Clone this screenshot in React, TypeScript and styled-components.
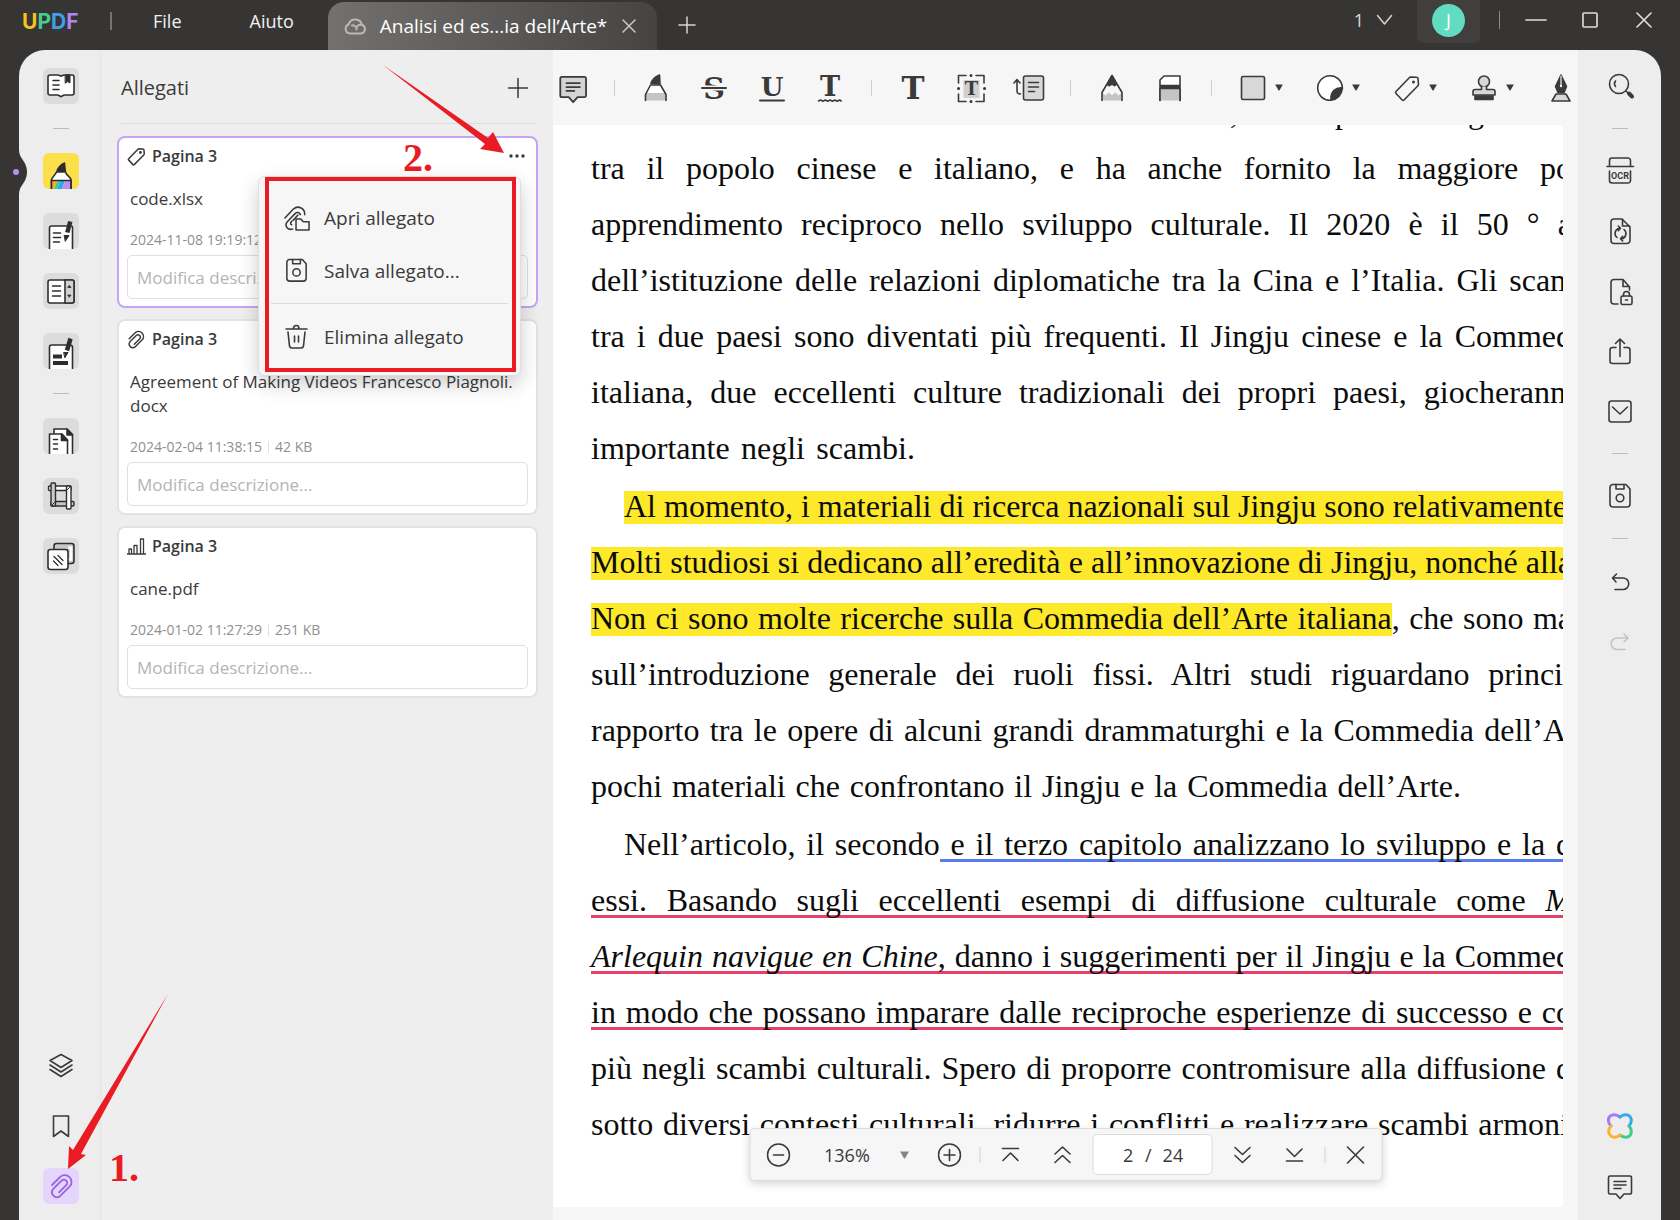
import React from "react";
import styled, { createGlobalStyle, css } from "styled-components";

const ui = `"Open Sans", "Noto Sans", sans-serif`;
const serif = `"Liberation Serif", "Times New Roman", serif`;
const ink = "#3b3a3a";

const Global = createGlobalStyle`
  *, *::before, *::after { box-sizing: border-box; }
  body { margin: 0; background: #363534; font-family: ${ui}; color: ${ink}; }
  button, input, select { font: inherit; color: inherit; margin: 0; }
  button { background: none; border: 0; padding: 0; cursor: pointer; }
  button svg { display: block; }
  p, h2, h3 { margin: 0; }
`;

/* ---------- window frame ---------- */

const Shell = styled.div`
  position: relative;
  display: flex;
  flex-direction: column;
  height: 100vh;
  min-width: 1200px;
  overflow: hidden;
  background: #363534;
`;

const TitleBar = styled.header`
  display: flex;
  align-items: stretch;
  height: 50px;
  padding: 0 24px 0 22px;
  color: #f1f1f1;
  font-size: 18px;
`;

const Logo = styled.div`
  display: flex;
  align-items: center;
  width: 57px;
  height: 42px;
  font-family: Inter, sans-serif;
  font-size: 21px;
  font-weight: 700;
`;

const LogoLetter = styled.span<{ $color: string }>`
  color: ${(p) => p.$color};
`;

const BarDivider = styled.span`
  width: 2px;
  height: 18px;
  margin: 12px 7px 0 31px;
  background: #757473;
`;

const MenuButton = styled.button`
  height: 42px;
  padding: 0 34px;
`;

const Tab = styled.div`
  display: flex;
  align-items: center;
  gap: 14px;
  width: 329px;
  height: 48px;
  margin-top: 2px;
  padding: 0 21px 0 16px;
  border-radius: 16px 16px 0 0;
  background: linear-gradient(90deg, #72716f, #454443);
`;

const TabTitle = styled.span`
  flex: 1;
  white-space: nowrap;
  color: #ffffff;
  font-size: 19px;
`;

const NewTab = styled.button`
  display: flex;
  align-items: center;
  padding: 0 21px;
`;

const WindowTools = styled.div`
  display: flex;
  align-items: center;
  height: 40px;
  margin-left: auto;
`;

const TabCount = styled.button`
  display: flex;
  align-items: center;
  gap: 12px;
  margin-right: 24px;
  color: #d9d9d9;
`;

const Account = styled.button`
  display: flex;
  justify-content: center;
  width: 63px;
  height: 43px;
  padding-top: 4px;
  align-self: flex-start;
  border-radius: 0 0 6px 6px;
  background: #403f3e;
`;

const Avatar = styled.span`
  width: 33px;
  height: 33px;
  border-radius: 50%;
  background: #62dcc0;
  color: #ffffff;
  line-height: 32px;
  text-align: center;
`;

const ToolsDivider = styled.span`
  width: 1px;
  height: 18px;
  margin: 0 24px 0 19px;
  background: #8a8988;
`;

const WindowButtons = styled.div`
  display: flex;
  gap: 30px;
`;

const WindowButton = styled.button`
  display: flex;
  justify-content: center;
  width: 24px;
`;

const Workspace = styled.main`
  position: relative;
  flex: 1;
  min-height: 0;
  display: flex;
  margin: 0 19px;
  border-radius: 26px 26px 0 0;
  background: #eeedee;
`;

/* ---------- side rails ---------- */

const Rail = styled.nav<{ $side: "left" | "right" }>`
  display: flex;
  flex-direction: column;
  align-items: center;
  gap: 24px;
  flex: none;
  width: 83px;
  padding: 18px 0 16px;
  ${(p) => p.$side === "left" && css`box-shadow: inset -3px 0 0 #eae9ea;`}
`;

const Tile = styled.button<{ $bg?: string; $push?: boolean }>`
  display: flex;
  flex: none;
  width: 36px;
  height: 36px;
  border-radius: 6px;
  overflow: hidden;
  background: ${(p) => p.$bg ?? "transparent"};
  ${(p) => p.$push && css`margin-top: auto;`}
`;

const RailLine = styled.span`
  flex: none;
  width: 16px;
  height: 1px;
  background: #bdbcbd;
`;

const Notch = styled.svg`
  position: absolute;
  left: -8px;
  top: 100px;
`;

/* ---------- attachments panel ---------- */

const Panel = styled.aside`
  flex: none;
  width: 451px;
  padding: 0 15px;
  background: #eeeeee;
`;

const PanelHead = styled.div`
  display: flex;
  align-items: center;
  justify-content: space-between;
  height: 74px;
  margin: 0 2px 12px 4px;
  padding: 2px 7px 0 0;
  border-bottom: 1px solid #dddddd;
`;

const PanelTitle = styled.h2`
  font-size: 20px;
  font-weight: 400;
`;

const CardList = styled.div`
  display: flex;
  flex-direction: column;
  gap: 11px;
`;

const Card = styled.article<{ $active?: boolean }>`
  position: relative;
  padding: 6px 8px 7px;
  border: 2px solid ${(p) => (p.$active ? "#c3a6f2" : "#e2e2e2")};
  border-radius: 8px;
  background: #ffffff;
`;

const CardHead = styled.div`
  display: flex;
  align-items: center;
  gap: 6px;
  height: 24px;
  padding-right: 2px;
`;

const CardTitle = styled.h3`
  flex: 1;
  font-size: 16px;
  line-height: 24px;
  font-weight: 600;
`;

const FileName = styled.p`
  padding: 0 3px;
  margin: 19px 0 17px;
  font-size: 17px;
  line-height: 24px;
  overflow-wrap: anywhere;
`;

const Meta = styled.p`
  display: flex;
  align-items: center;
  gap: 6px;
  padding: 0 3px;
  margin-bottom: 3px;
  font-size: 14px;
  line-height: 24px;
  color: #8f8f8f;
`;

const MetaLine = styled.span`
  width: 1px;
  height: 12px;
  background: #e0e0e0;
`;

const Note = styled.input`
  display: block;
  width: 100%;
  height: 44px;
  padding: 0 9px;
  border: 1px solid #e0e0e0;
  border-radius: 5px;
  background: #ffffff;
  font-size: 17px;
  &::placeholder { color: #b4b4b4; opacity: 1; }
`;

const Menu = styled.div`
  position: absolute;
  z-index: 2;
  left: 139px;
  top: 38px;
  width: 263px;
  height: 200px;
  padding: 14px 12px 12px;
  border: 1px solid #dedede;
  border-radius: 7px;
  background: #f7f6f6;
  box-shadow: 0 8px 20px rgba(0, 0, 0, 0.2);
`;

const MenuItem = styled.button`
  display: flex;
  align-items: center;
  gap: 14px;
  width: 100%;
  height: 53px;
  padding-left: 12px;
  font-size: 19px;
  white-space: nowrap;
`;

const MenuLine = styled.div`
  height: 1px;
  margin: 6px 0;
  background: #dcdcdc;
`;

const RedFrame = styled.div`
  position: absolute;
  inset: 0 4px 3px 6px;
  border: 4px solid #e91c24;
  pointer-events: none;
`;

/* ---------- document ---------- */

const Doc = styled.section`
  position: relative;
  flex: 1;
  min-width: 0;
  display: flex;
  flex-direction: column;
  background: #f6f6f7;
`;

const Toolbar = styled.div`
  display: flex;
  align-items: center;
  gap: 24px;
  flex: none;
  height: 75px;
  padding: 0 3px;
  overflow: hidden;
`;

const Tool = styled.button<{ $menu?: boolean }>`
  display: flex;
  align-items: center;
  gap: 5px;
  flex: none;
  width: ${(p) => (p.$menu ? 53 : 34)}px;
`;

const ToolLine = styled.span`
  flex: none;
  width: 1px;
  height: 16px;
  background: #cfcfcf;
`;

const Page = styled.div`
  flex: 1;
  min-height: 0;
  margin: 0 15px 13px 0;
  padding-left: 38px;
  overflow: hidden;
  background: #ffffff;
  color: #0c0c0c;
  font-family: ${serif};
  font-size: 32px;
  line-height: 56px;
`;

const CutLine = styled.div`
  display: grid;
  grid-template-columns: 105px 133px 95px;
  grid-template-rows: 15px;
  justify-content: end;
  align-items: end;
`;

const Paragraph = styled.div`
  margin-bottom: 2px;
`;

const Line = styled.p<{ $indent?: boolean; $bleed: number }>`
  width: calc(100% + ${(p) => p.$bleed}px);
  padding-left: ${(p) => (p.$indent ? 33 : 0)}px;
  white-space: nowrap;
  text-align: justify;
  text-align-last: justify;
`;

const Marked = styled.mark`
  color: inherit;
  background: linear-gradient(#fde82a, #fde82a) 0 100% / 100% 33px no-repeat;
`;

const Ruled = styled.span<{ $color: string }>`
  background: linear-gradient(${(p) => p.$color}, ${(p) => p.$color}) 0 100% / 100% 3px no-repeat;
`;

const ZoomBar = styled.div`
  position: absolute;
  left: 50%;
  bottom: 39px;
  transform: translateX(-50%);
  display: flex;
  align-items: center;
  gap: 18px;
  height: 53px;
  padding: 0 14px 0 16px;
  border: 1px solid #dcdcdc;
  border-radius: 5px;
  background: #f6f6f6;
  box-shadow: 0 3px 8px rgba(0, 0, 0, 0.16);
  font-size: 18px;
`;

const Group = styled.div`
  display: flex;
  align-items: center;
  gap: 28px;
`;

const BarButton = styled.button`
  display: flex;
  width: 24px;
  height: 24px;
`;

const ZoomSelect = styled.label`
  display: flex;
  align-items: center;
  gap: 28px;
`;

const Select = styled.select`
  appearance: none;
  width: 53px;
  padding: 0 0 0 6px;
  border: 0;
  background: none;
  white-space: nowrap;
`;

const PageBox = styled.label`
  display: flex;
  align-items: center;
  gap: 11px;
  width: 120px;
  height: 41px;
  padding-left: 30px;
  border: 1px solid #dcdcdc;
  border-radius: 5px;
  background: #ffffff;
`;

const PageInput = styled.input`
  width: 11px;
  padding: 0;
  border: 0;
  background: none;
`;

/* ---------- annotations ---------- */

const Arrows = styled.svg`
  position: absolute;
  z-index: 3;
  left: 0;
  pointer-events: none;
`;

const StepOne = styled.span`
  position: absolute;
  z-index: 3;
  left: 109px;
  bottom: 30px;
  color: #e91c24;
  font: bold 40px/44px ${serif};
`;

const StepTwo = styled(StepOne)`
  left: 403px;
  top: 136px;
  bottom: auto;
`;

/* ---------- icons ---------- */

type IconProps = { w?: number; h?: number; box?: string; stroke?: string; sw?: number; children: React.ReactNode };

const IconSvg = styled.svg`
  flex: none;
`;

const Icon = ({ w = 36, h = w, box, stroke = ink, sw = 1.6, children }: IconProps) => (
  <IconSvg
    width={w}
    height={h}
    viewBox={box ?? `0 0 ${w} ${h}`}
    fill="none"
    stroke={stroke}
    strokeWidth={sw}
    strokeLinecap="round"
    strokeLinejoin="round"
    aria-hidden="true"
  >
    {children}
  </IconSvg>
);

const dark = "#2f2d30";
const clipPath = "M9 17 17.2 8.8a6.8 6.8 0 0 1 9.6 9.6L17 28.2a5 5 0 0 1-7-7l8.6-8.6a3.25 3.25 0 0 1 4.6 4.6L16 24.4";

const saveShape = (
  <>
    <path d="M10 6.5H24l4 4.500V26a3 3 0 0 1-3 3H11a3 3 0 0 1-3-3V9.500a3 3 0 0 1 3-3z" />
    <path d="M14 6.500v4.500h8V6.500" />
    <circle cx="18" cy="20" r="3.800" />
  </>
);

const Caret = ({ w = 8, h = 7, color = ink }: { w?: number; h?: number; color?: string }) => (
  <Icon w={w} h={h} box="0 0 10 9" stroke="none"><path d="M0 .5H10L5.500 8.500h-1z" fill={color} /></Icon>
);

const leftIcons = {
  book: (
    <Icon stroke={dark}>
      <path d="M7 7h7.500c2 0 2 1 3.500 1s1.500-1 3.500-1H29a2 2 0 0 1 2 2v16a2 2 0 0 1-2 2h-7.500c-2 0-2 1.500-3.500 1.500S16.500 27 14.500 27H7a2 2 0 0 1-2-2V9a2 2 0 0 1 2-2z" fill="#fff" />
      <path d="M10 12.500h6M10 17h6M10 21.500h6" />
      <path d="M22.500 7h4.500v8l-2.250-1.500L22.500 15z" fill={dark} strokeWidth="1" />
    </Icon>
  ),
  marker: (
    <Icon stroke={dark}>
      <path d="M14 18.500c0-3 4-7 7.500-8.500l.8 8.500z" fill={dark} />
      <path d="M8.500 36V27c0-3 3.500-4 5-8h9c1 4 5.500 5 5.500 8v9" fill="#fff" />
      <g stroke="none">
        <path d="M9 28h5l-3 8H9z" fill="#f5b019" />
        <path d="M14 28h3l-3 8h-3z" fill="#4fc58a" />
        <path d="M17 28h5l-3 8h-5z" fill="#27aee4" />
        <path d="M22 28h5.500v8H19z" fill="#bd8df0" />
      </g>
      <path d="M8.500 27.500H28M8.500 27v9M28 27v9" />
    </Icon>
  ),
  edit: (
    <Icon stroke={dark}>
      <path d="M6.500 37V15a2 2 0 0 1 2-2H28a1.500 1.500 0 0 1 1.500 1.500V37" fill="#fff" />
      <path d="M10.500 20h7M10.500 24.500h7M10.500 29h6" />
      <path d="m27.300 8.500-3 11" strokeWidth="4.500" strokeLinecap="butt" />
      <path d="M21.500 22.500h4.500l-3.500 5.500z" fill={dark} strokeWidth="1" />
    </Icon>
  ),
  reader: (
    <Icon stroke={dark}>
      <rect x="5" y="7" width="26" height="23" rx="2" fill="#fff" />
      <path d="M22 7h7a2 2 0 0 1 2 2v19a2 2 0 0 1-2 2h-7z" fill="#d2d1d2" />
      <path d="M9.500 13h8M9.500 18h8M9.500 23h8" />
      <path d="m26.500 12.500 1.500 2h-3zM26.500 24l1.500-2h-3z" fill={dark} strokeWidth=".8" />
    </Icon>
  ),
  redact: (
    <Icon stroke={dark}>
      <path d="M6.500 37V14a2 2 0 0 1 2-2H27a2.500 2.500 0 0 1 2.500 2.500V37" fill="#fff" />
      <path d="M10 23.500h9M10 30h15" strokeWidth="4" strokeLinecap="butt" />
      <path d="m27.500 5.500-3.500 12" strokeWidth="4.500" strokeLinecap="butt" />
      <path d="M21 19.500h4l-3 5z" fill={dark} strokeWidth="1" />
    </Icon>
  ),
  pages: (
    <Icon stroke={dark}>
      <path d="M11 37V11h13l5.500 5.500V37" fill="#fff" />
      <path d="M24 11v6h5.500z" fill={dark} />
      <path d="M6.500 37V16H19l5.500 6V37" fill="#fff" />
      <path d="M18.500 16v6.500h6z" fill={dark} />
      <path d="M10.500 21.500h4M10.500 26h4M10.500 31h4" />
    </Icon>
  ),
  crop: (
    <Icon stroke={dark} sw={1.4}>
      <rect x="8" y="23.500" width="23" height="4.500" rx="1" fill="#c9c8c9" />
      <rect x="5.500" y="8" width="22.500" height="4.500" rx="1" fill="#fff" />
      <rect x="8" y="5" width="4.500" height="23" rx="1" fill="#c9c8c9" />
      <rect x="23.500" y="8" width="4.500" height="23" rx="1" fill="#fff" />
      <path d="m9 27 3.500-3.500M27.500 8.500l-4 4" strokeWidth="1" />
    </Icon>
  ),
  watermark: (
    <Icon stroke={dark}>
      <rect x="11" y="5.500" width="20" height="20" rx="2.500" fill="#c9c8c9" />
      <path d="M26.500 9.500h1.500v12h-1.500" stroke="#fff" strokeWidth="2.500" />
      <rect x="5" y="11.500" width="20" height="20" rx="2.500" fill="#fff" />
      <path d="m11 18.500 8 8M15 17.500l5 5M10.500 23l4.500 4.500" strokeWidth="1.300" />
    </Icon>
  ),
};

const leftTools: Array<[string, React.ReactNode]> = [
  ["Lettore", leftIcons.book],
  ["Commenti", leftIcons.marker],
  ["Modifica", leftIcons.edit],
  ["Modulo", leftIcons.reader],
  ["Oscura", leftIcons.redact],
  ["Pagine", leftIcons.pages],
  ["Ritaglia", leftIcons.crop],
  ["Filigrana", leftIcons.watermark],
];

const CommentShape = ({ fill = "none" }: { fill?: string }) => (
  <>
    <path d="M8 8H28a1.500 1.500 0 0 1 1.500 1.500V24.500A1.500 1.500 0 0 1 28 26h-6l-4 4.500L14 26H8a1.500 1.500 0 0 1-1.500-1.500V9.500A1.500 1.500 0 0 1 8 8z" fill={fill} />
    <path d="M12 13.500h12M12 17h12M12 20.500h7" />
  </>
);

const glyph = { fontFamily: `"DejaVu Serif", serif`, fontWeight: 700, fill: ink, stroke: "none", textAnchor: "middle" as const };

const toolIcons: Array<[string, React.ReactNode, boolean?] | null> = [
  ["Nota", <Icon w={34} box="1 2 34 34"><g transform="translate(-2 -1) scale(1.120)"><CommentShape fill="#d5d4d5" /></g></Icon>],
  null,
  ["Evidenzia", <Icon w={34}><path d="M12 12.500c1-4 4-6.500 8.500-8.500l.5 9z" fill={ink} /><path d="M6.500 29.500v-7L11.500 14h10l5.500 8.500v7z" fill="#fff" stroke="none" /><path d="M6.500 22h20.500v7.500H6.500z" fill="#c4c4c4" stroke="none" /><path d="M6.500 29.500v-6L11.500 14h10l5.500 9.500v6" /></Icon>],
  ["Barrato", <Icon w={34}><text x="17" y="28" fontSize="30" {...glyph}>S</text><path d="M5 17h24" stroke="#f6f6f7" strokeWidth="5" /><path d="M5 17h24" strokeWidth="2" /></Icon>],
  ["Sottolineato", <Icon w={34}><text x="17" y="25" fontSize="26" {...glyph}>U</text><path d="M5 29.500h24" strokeWidth="2" /></Icon>],
  ["Ondulato", <Icon w={34}><text x="17" y="25" fontSize="27" {...glyph}>T</text><path d="m5.500 30 2-1 2.400 1.200 2.400-1.200 2.400 1.200 2.400-1.200 2.400 1.200 2.400-1.200 2.400 1.200 2.400-1.200 1.500 1" /></Icon>],
  null,
  ["Testo", <Icon w={34}><text x="17" y="28" fontSize="31" {...glyph}>T</text></Icon>],
  ["Casella di testo", <Icon w={34}><rect x="9.500" y="9" width="16" height="18" fill="#d0d0d0" stroke="none" /><path d="M12 4.500H4.500V12M22 4.500h8V12M12 30.500H4.500V23M22 30.500h8V23" /><path d="M17 4.500v.1M17 30.500v.1M4.500 17.500h.1M30.500 17.500h.1" strokeWidth="3" /><text x="17.500" y="24" fontSize="18" {...glyph}>T</text></Icon>],
  ["Didascalia", <Icon w={34}><rect x="11.500" y="5" width="20" height="24" rx="2" fill="#d8d8d8" /><path d="M16.500 11.500h10M16.500 16h10M16.500 20.500h6M8.500 23C5.500 23 5 22 5 20V9M2 12l3-3.500L8 12" /></Icon>],
  null,
  ["Matita", <Icon w={34}><path d="m7 21.500 3.300 3 3.400-3 3.300 3 3.300-3 3.400 3 3.300-3v8H7z" fill="#c4c4c4" stroke="none" /><path d="M7 29.500v-8L17 4.500l10 17v8" /><path d="m12 13.500 5-9.500 5 9.500-2.500 1.500-2.500-1.500-2.500 1.500z" fill={ink} strokeWidth="1" /></Icon>],
  ["Gomma", <Icon w={34}><path d="M7 29.500V9l4-4h16v24.500" fill="#fff" /><path d="M7 18h20v11.500H7z" fill="#c4c4c4" stroke="none" /><path d="M7 29.500V18m20 11.500V18" /><path d="M7 16h20" strokeWidth="4.500" strokeLinecap="butt" /></Icon>],
  null,
  ["Forma", <Icon w={34}><rect x="5.500" y="5.500" width="23" height="23" rx="1.500" fill="#d8d8d8" /></Icon>, true],
  ["Adesivo", <Icon w={34}><path d="M29.300 16.500A12.300 12.300 0 1 0 17.500 29.300" fill="#fff" /><path d="M29.500 17c-6-1-12.500 3-11.500 12.300C24 28.500 28.500 24 29.500 17z" fill={ink} /></Icon>, true],
  ["Allegato", <Icon w={34}><path d="m6 20.500 13-13.500c.6-.7 1.200-1 2-1l5.500.3c1 0 1.500.6 1.500 1.500L28.500 13c0 .8-.3 1.500-.8 2L14 29c-.5.600-1.200.6-1.800 0L6 22.500c-.6-.600-.6-1.400 0-2z" /><circle cx="23.500" cy="11" r="1.500" fill={ink} stroke="none" /></Icon>, true],
  ["Timbro", <Icon w={34}><circle cx="17" cy="10.500" r="5.500" fill="#d8d8d8" /><path d="M14.500 15.500v3H8a2 2 0 0 0-2 2V24h22v-3.500a2 2 0 0 0-2-2h-6.500v-3" fill="#d8d8d8" /><path d="M8 25h18v3.500H8z" fill={ink} /></Icon>, true],
  ["Firma", <Icon w={34}><path d="m17 4 5.500 11.500-2.500 6h-6l-2.500-6z" fill={ink} /><path d="M17 5v9" stroke="#f6f6f7" strokeWidth="1.200" /><circle cx="17" cy="15" r="1.200" fill="#f6f6f7" stroke="none" /><path d="M12 23h10l4 7H8z" fill="#d8d8d8" /></Icon>],
];

const docOutline = "M20 6H12a3 3 0 0 0-3 3v18.500a3 3 0 0 0 3 3h13a3 3 0 0 0 3-3V14z";

const rightIcons: Array<[string, React.ReactNode] | null> = [
  ["Cerca", <Icon><circle cx="17" cy="16" r="9.500" /><path d="M13.500 13a4.500 4.500 0 0 0 0 5.500M24 23l3 3" /><path d="m27 25.500 3 3" strokeWidth="4" /></Icon>],
  null,
  ["OCR", <Icon><path d="M7.500 13V7.500a2.500 2.500 0 0 1 2.500-2.500h16a2.500 2.500 0 0 1 2.500 2.500V13M5 13.500h26.500M7.500 18v9.500a2.500 2.500 0 0 0 2.500 2.500h16a2.500 2.500 0 0 0 2.500-2.500V18" /><text x="18" y="26" fontSize="9" fontFamily="Roboto, sans-serif" fontWeight="700" fill={ink} stroke="none" textAnchor="middle">OCR</text></Icon>],
  ["Converti", <Icon><path d={docOutline} /><path d="M20.500 6.500V13h7M15 24.500a5.200 5.200 0 0 1 2.500-9.200M16.300 13l2.200 2.300-2.200 2.300M22 16.500a5.200 5.200 0 0 1-2.500 9.200M20.700 23.400l-2.200 2.300 2.200 2.300" /></Icon>],
  ["Proteggi", <Icon><path d="M16 31h-4a3 3 0 0 1-3-3V9.500a3 3 0 0 1 3-3h9l6.500 7.500v3M21 7v6.500h6.500" /><rect x="19" y="23" width="11" height="8.500" rx="1.500" /><path d="M21.500 23v-1.500a3 3 0 0 1 6 0V23M23.500 27h2" /></Icon>],
  ["Condividi", <Icon><path d="M14 14.500h-3.500A2.500 2.500 0 0 0 8 17v11a2.500 2.500 0 0 0 2.500 2.500h15A2.500 2.500 0 0 0 28 28V17a2.500 2.500 0 0 0-2.500-2.500H22M18 23.500V6M13.500 10.500 18 6l4.500 4.500" /></Icon>],
  ["E-mail", <Icon><rect x="7" y="8" width="22" height="21" rx="2.500" /><path d="m10.500 14 7.500 7 7.500-7" /></Icon>],
  null,
  ["Salva", <Icon>{saveShape}</Icon>],
  null,
  ["Annulla", <Icon><path d="M14.500 11 10.500 15l3.500 4M10.500 15H21a5.500 5.500 0 0 1 0 11.500h-8" /></Icon>],
  ["Ripeti", <Icon stroke="#c4c3c4"><path d="m22 11 4 4-4 4M26 15H15a5.500 5.500 0 0 0 0 11.500h8" /></Icon>],
];

/* ---------- data ---------- */

const files = [
  {
    icon: <Icon w={19} box="3.500 3.500 27.500 27.500" sw={2.2}><path d="m6 20.500 13-13.500c.6-.7 1.200-1 2-1l5.500.3c1 0 1.500.6 1.500 1.500L28.500 13c0 .8-.3 1.500-.8 2L14 29c-.5.600-1.200.6-1.800 0L6 22.500c-.6-.600-.6-1.400 0-2z" /><circle cx="23" cy="11.500" r="1" /></Icon>,
    name: "code.xlsx", date: "2024-11-08 19:19:12", size: "", active: true,
  },
  {
    icon: <Icon w={19} box="6 5 26 26" sw={2}><path d={clipPath} /></Icon>,
    name: "Agreement of Making Videos Francesco Piagnoli. docx", date: "2024-02-04 11:38:15", size: "42 KB",
  },
  {
    icon: <Icon w={19} sw={1.300}><path d="M0 17h19M2 17v-5h2.500v5M7 17V8.500h3V17M13.500 17V2h3v15" /></Icon>,
    name: "cane.pdf", date: "2024-01-02 11:27:29", size: "251 KB",
  },
];

const red = "#e8406b";
type TextLine = { text: React.ReactNode; bleed: number; indent?: boolean };

const paragraphs: TextLine[][] = [
  [
    { text: "tra il popolo cinese e italiano, e ha anche fornito la maggiore po", bleed: 9 },
    { text: "apprendimento reciproco nello sviluppo culturale. Il 2020 è il 50 ° a", bleed: 9 },
    { text: "dell’istituzione delle relazioni diplomatiche tra la Cina e l’Italia. Gli scam", bleed: 12 },
    { text: "tra i due paesi sono diventati più frequenti. Il Jingju cinese e la Commed", bleed: 9 },
    { text: "italiana, due eccellenti culture tradizionali dei propri paesi, giocherann", bleed: 3 },
    { text: "importante negli scambi.", bleed: -648 },
  ],
  [
    { text: <Marked>Al momento, i materiali di ricerca nazionali sul Jingju sono relativamente</Marked>, bleed: 3, indent: true },
    { text: <Marked>Molti studiosi si dedicano all’eredità e all’innovazione di Jingju, nonché alla</Marked>, bleed: 9 },
    { text: <><Marked>Non ci sono molte ricerche sulla Commedia dell’Arte italiana</Marked>, che sono ma</>, bleed: 9 },
    { text: "sull’introduzione generale dei ruoli fissi. Altri studi riguardano princi", bleed: 0 },
    { text: "rapporto tra le opere di alcuni grandi drammaturghi e la Commedia dell’A", bleed: 3 },
    { text: "pochi materiali che confrontano il Jingju e la Commedia dell’Arte.", bleed: -102 },
  ],
  [
    { text: <>Nell’articolo, il secondo<Ruled $color="#587bf2"> e il terzo capitolo analizzano lo sviluppo e la d</Ruled></>, bleed: 9, indent: true },
    { text: <Ruled $color={red}>essi. Basando sugli eccellenti esempi di diffusione culturale come <em>M</em></Ruled>, bleed: 9 },
    { text: <Ruled $color={red}><em>Arlequin navigue en Chine</em>, danno i suggerimenti per il Jingju e la Commed</Ruled>, bleed: 9 },
    { text: <Ruled $color={red}>in modo che possano imparare dalle reciproche esperienze di successo e co</Ruled>, bleed: 9 },
    { text: "più negli scambi culturali. Spero di proporre contromisure alla diffusione d", bleed: 9 },
    { text: "sotto diversi contesti culturali, ridurre i conflitti e realizzare scambi armoni", bleed: 6 },
  ],
];

/* ---------- parts ---------- */

const AttachmentMenu = () => (
  <Menu>
    <MenuItem>
      <Icon w={27} box="3 3 28 28">
        <path d="M5 17.500 14 8a7 7 0 0 1 11.500 6" />
        <path d="m13 29c-5 1.500-9-3.500-5.500-7.500l8-8.500a3.200 3.200 0 0 1 5.500 1M13.500 20l5-5.500M12 24.500c-1.500-.5-1.500-2 0-3.500" />
        <path d="M16.500 18.500h5l2.500 3h6V30h-13.500z" fill="#f7f6f6" />
      </Icon>
      Apri allegato
    </MenuItem>
    <MenuItem><Icon w={27} box="4 4 28 28">{saveShape}</Icon>Salva allegato...</MenuItem>
    <MenuLine />
    <MenuItem>
      <Icon w={27}><path d="M3 6h21M10.500 5.500c0-4 5.500-4 5.500 0M5 9l1.500 14a2.500 2.500 0 0 0 2.500 2h9a2.500 2.500 0 0 0 2.500-2L22 9M11.500 13v6M15.500 13v6" /></Icon>
      Elimina allegato
    </MenuItem>
    <RedFrame />
  </Menu>
);

const Attachments = () => (
  <Panel>
    <PanelHead>
      <PanelTitle>Allegati</PanelTitle>
      <button aria-label="Aggiungi allegato"><Icon w={22}><path d="M11 1.500v19M1.500 11h19" strokeWidth="1.500" /></Icon></button>
    </PanelHead>
    <CardList>
      {files.map((f) => (
        <Card key={f.name} $active={f.active}>
          <CardHead>
            {f.icon}
            <CardTitle>Pagina 3</CardTitle>
            {f.active && (
              <button aria-label="Altro">
                <Icon w={18} h={6} stroke="none"><g fill={ink}><circle cx="3" cy="3" r="1.700" /><circle cx="9" cy="3" r="1.700" /><circle cx="15" cy="3" r="1.700" /></g></Icon>
              </button>
            )}
          </CardHead>
          <FileName>{f.name}</FileName>
          <Meta>{f.date}{f.size && <><MetaLine />{f.size}</>}</Meta>
          <Note aria-label={`Descrizione di ${f.name}`} placeholder="Modifica descrizione..." />
          {f.active && <AttachmentMenu />}
        </Card>
      ))}
    </CardList>
  </Panel>
);

const LeftRail = () => (
  <Rail $side="left">
    {leftTools.map(([title, icon], i) => (
      <React.Fragment key={title}>
        {(i === 1 || i === 5) && <RailLine />}
        <Tile aria-label={title} $bg={i === 1 ? "#fbe04c" : "#dddcdd"}>{icon}</Tile>
      </React.Fragment>
    ))}
    <Tile aria-label="Livelli" $push>
      <Icon><path d="m18 6.500 11 6-11 7-11-7zM7 17l11 7 11-7M7 21.500l11 7 11-7" /></Icon>
    </Tile>
    <Tile aria-label="Segnalibri"><Icon><path d="M10.500 8h15v20.500L18 23l-7.500 5.500z" /></Icon></Tile>
    <Tile aria-label="Allegati" $bg="#e4d5fd"><Icon stroke="#9b62e0" sw={1.8}><path d={clipPath} /></Icon></Tile>
  </Rail>
);

const RightRail = () => (
  <Rail $side="right">
    {rightIcons.map((item, i) =>
      item ? <Tile key={item[0]} aria-label={item[0]}>{item[1]}</Tile> : <RailLine key={i} />
    )}
    <Tile aria-label="Assistente" $push>
      <Icon sw={3}>
        <path d="M9 18c-3.500-3.500-3.500-8.500 0-10.500 3-1.500 6-1 9 1.500" stroke="#a77cf0" />
        <path d="M18 9c3-3 7.500-3 10-.5 2 3 1.500 6.500-1 9.500" stroke="#36a9ee" />
        <path d="M27 18c3 3 3 7.500.5 10-3 2-6.500 1.500-9.500-1" stroke="#3fcb8c" />
        <path d="M18 27c-3 3-8 3-10 0-2-2.500-1.500-6 1-9" stroke="#f8b62c" />
      </Icon>
    </Tile>
    <Tile aria-label="Elenco commenti"><Icon><CommentShape /></Icon></Tile>
  </Rail>
);

const Document = () => (
  <Doc>
    <Toolbar>
      {toolIcons.map((t, i) =>
        t ? (
          <Tool key={t[0]} aria-label={t[0]} $menu={t[2]}>{t[1]}{t[2] && <Caret />}</Tool>
        ) : (
          <ToolLine key={i} />
        )
      )}
    </Toolbar>
    <Page>
      <CutLine><span>,</span><span>p</span><span>g</span></CutLine>
      {paragraphs.map((lines, i) => (
        <Paragraph key={i}>
          {lines.map((l, j) => <Line key={j} $indent={l.indent} $bleed={l.bleed}>{l.text}</Line>)}
        </Paragraph>
      ))}
    </Page>
    <ZoomBar>
      <Group>
        <BarButton aria-label="Riduci"><Icon w={24}><circle cx="12" cy="12" r="11" /><path d="M7 12h10" /></Icon></BarButton>
        <ZoomSelect>
          <Select aria-label="Zoom" defaultValue="136%"><option>136%</option></Select>
          <Caret w={10} h={8} color="#858585" />
        </ZoomSelect>
        <BarButton aria-label="Ingrandisci"><Icon w={24}><circle cx="12" cy="12" r="11" /><path d="M6.500 12h11M12 6.500v11" /></Icon></BarButton>
      </Group>
      <ToolLine />
      <Group>
        <BarButton aria-label="Prima pagina"><Icon w={24}><path d="M4 5.500h16M4.500 17.500 12 10l7.500 7.500" /></Icon></BarButton>
        <BarButton aria-label="Pagina precedente"><Icon w={24}><path d="M4.500 11 12 4l7.500 7M4.500 19.500l7.500-7 7.500 7" /></Icon></BarButton>
      </Group>
      <PageBox>
        <PageInput aria-label="Pagina" defaultValue="2" />
        <span>/</span>
        <span>24</span>
      </PageBox>
      <Group>
        <BarButton aria-label="Pagina successiva"><Icon w={24}><path d="m4.500 4.500 7.500 7 7.500-7M4.500 12.500l7.500 7 7.500-7" /></Icon></BarButton>
        <BarButton aria-label="Ultima pagina"><Icon w={24}><path d="m4.500 6 7.500 7.500L19.500 6M4 18h16" /></Icon></BarButton>
      </Group>
      <ToolLine />
      <BarButton aria-label="Chiudi"><Icon w={24}><path d="m4 4 16 16M20 4 4 20" /></Icon></BarButton>
    </ZoomBar>
  </Doc>
);

const Header = () => (
  <TitleBar>
    <Logo>
      <LogoLetter $color="#f6c21c">U</LogoLetter>
      <LogoLetter $color="#43cf8b">P</LogoLetter>
      <LogoLetter $color="#3f9fe8">D</LogoLetter>
      <LogoLetter $color="#b184f2">F</LogoLetter>
    </Logo>
    <BarDivider />
    <MenuButton>File</MenuButton>
    <MenuButton>Aiuto</MenuButton>
    <Tab>
      <Icon w={22} h={18} stroke="#b9b8b7" sw={2}>
        <path d="M6 16.500h10.500a4.500 4.500 0 0 0 1.500-8.700A7 7 0 0 0 4.500 7.500 4.700 4.700 0 0 0 6 16.500zM18 8c-3-1-6 1-5.500 4.500M8 8.500c1.500-.5 3 0 4.500 2" />
      </Icon>
      <TabTitle>Analisi ed es...ia dell’Arte*</TabTitle>
      <button aria-label="Chiudi scheda"><Icon w={14} stroke="#c9c8c7" sw={1.5}><path d="m1 1 12 12M13 1 1 13" /></Icon></button>
    </Tab>
    <NewTab aria-label="Nuova scheda"><Icon w={18} stroke="#d5d5d5" sw={1.5}><path d="M9 1v16M1 9h16" /></Icon></NewTab>
    <WindowTools>
      <TabCount>1<Icon w={17} h={12} stroke="#d5d5d5" sw={1.5}><path d="m1.500 1.500 7 8.500 7-8.500" /></Icon></TabCount>
      <Account aria-label="Account"><Avatar>J</Avatar></Account>
      <ToolsDivider />
      <WindowButtons>
        <WindowButton aria-label="Riduci a icona"><Icon w={22} h={16} stroke="#e0e0e0"><path d="M1 8h20" /></Icon></WindowButton>
        <WindowButton aria-label="Ingrandisci finestra"><Icon w={16} stroke="#e0e0e0"><rect x="1" y="1" width="14" height="14" rx="1" /></Icon></WindowButton>
        <WindowButton aria-label="Chiudi finestra"><Icon w={16} stroke="#e0e0e0"><path d="m1 1 14 14M15 1 1 15" /></Icon></WindowButton>
      </WindowButtons>
    </WindowTools>
  </TitleBar>
);

export default function App() {
  return (
    <>
      <Global />
      <Shell>
        <Header />
        <Workspace>
          <LeftRail />
          <Attachments />
          <Document />
          <RightRail />
          <Notch width="18" height="44" viewBox="0 0 18 44">
            <path d="M8 0c0 9 8 11 8 22S8 35 8 44z" fill="#363534" />
            <circle cx="5" cy="22" r="3" fill="#b98cf3" />
          </Notch>
        </Workspace>
        <Arrows width="520" height="160" style={{ top: 0 }}>
          <path d="M383 65 488 138l5-6 11 21-24-4 5-5z" fill="#e91c24" />
        </Arrows>
        <StepTwo>2.</StepTwo>
        <Arrows width="180" height="240" style={{ bottom: 0 }}>
          <path d="M168 14 81 174l5 1-18 14 1-23 4 4z" fill="#e91c24" />
        </Arrows>
        <StepOne>1.</StepOne>
      </Shell>
    </>
  );
}
